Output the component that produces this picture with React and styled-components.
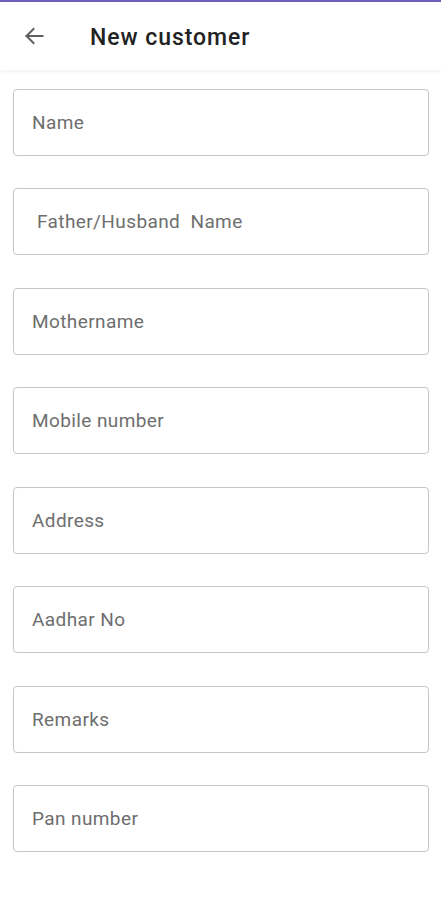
import React from "react";
import styled, { createGlobalStyle } from "styled-components";

const Global = createGlobalStyle`
  html, body { margin: 0; padding: 0; background: #ffffff; }
  body { font-family: Roboto, "Noto Sans", "Liberation Sans", sans-serif; }
  * { box-sizing: border-box; }
`;

const Page = styled.div`
  display: flex;
  flex-direction: column;
  min-height: 900px;
  background: #fff;
`;

const StatusStrip = styled.div`
  height: 2px;
  background: #6b5fc0;
`;

const Header = styled.header`
  height: 68px;
  display: flex;
  align-items: center;
  padding-left: 22px;
  gap: 44px;
  background: #fff;
  box-shadow: 0 2px 4px rgba(0, 0, 0, 0.06);
  position: relative;
  z-index: 1;
`;

const BackButton = styled.button`
  border: none;
  background: transparent;
  padding: 0;
  width: 24px;
  height: 24px;
  display: flex;
  align-items: center;
  justify-content: center;
  color: #606060;
`;

const Title = styled.h1`
  margin: 0;
  font-size: 23px;
  font-weight: 500;
  color: #222;
  letter-spacing: 0.95px;
  line-height: 28px;
  padding-top: 4px;
`;

const Form = styled.form`
  display: flex;
  flex-direction: column;
  gap: 32.43px;
  padding: 19px 12px 0 13px;
`;

const Field = styled.div`
  height: 67px;
  border: 1px solid #c6c6c6;
  border-radius: 4px;
  display: flex;
  align-items: center;
  padding-left: ${(p) => (p.$indent ? "23px" : "18px")};
  font-size: 19px;
  letter-spacing: 0.4px;
  color: #6e6e6e;
`;

const fields = [
  { label: "Name" },
  { label: "Father/Husband\u00a0 Name", indent: true },
  { label: "Mothername" },
  { label: "Mobile number" },
  { label: "Address" },
  { label: "Aadhar No" },
  { label: "Remarks" },
  { label: "Pan number" },
];

export default function App() {
  return (
    <Page>
      <Global />
      <StatusStrip />
      <Header>
        <BackButton aria-label="Back">
          <svg width="24" height="24" viewBox="0 0 24 24" fill="none" stroke="currentColor" strokeWidth="2" strokeLinecap="square">
            <path d="M20.5 12H4.5" />
            <path d="M11.5 5l-7 7 7 7" />
          </svg>
        </BackButton>
        <Title>New customer</Title>
      </Header>
      <Form>
        {fields.map((f) => (
          <Field key={f.label} $indent={f.indent}>
            {f.label}
          </Field>
        ))}
      </Form>
    </Page>
  );
}
